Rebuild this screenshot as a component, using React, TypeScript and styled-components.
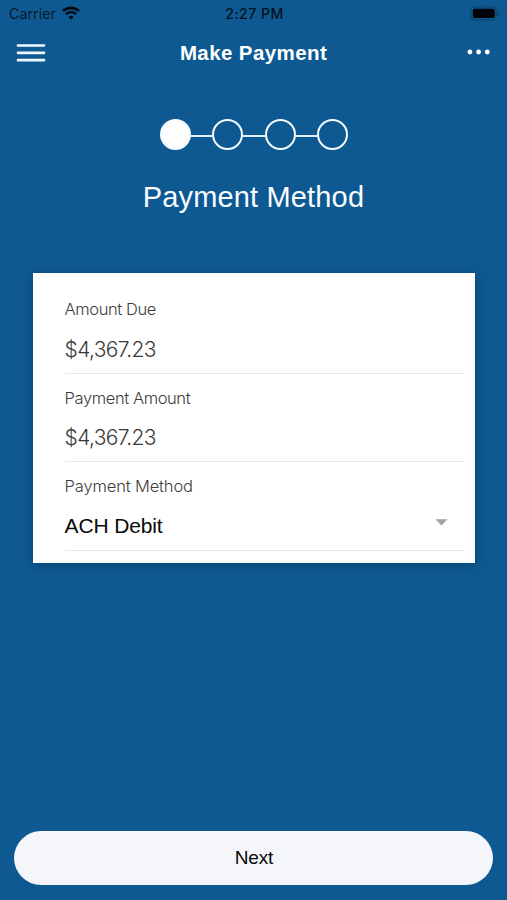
import React from "react";
import styled, { createGlobalStyle } from "styled-components";

const GlobalStyle = createGlobalStyle`
  * { box-sizing: border-box; }
  body { margin: 0; background: #0e5991; }
`;

const Screen = styled.div`
  width: 507px;
  height: 900px;
  display: flex;
  flex-direction: column;
  background: #0e5991;
  font-family: "Liberation Sans", Arial, sans-serif;
  overflow: hidden;
`;

const StatusBar = styled.header`
  height: 28px;
  display: grid;
  grid-template-columns: 1fr auto 1fr;
  align-items: center;
  padding: 0 7px 0 9px;
  color: #041a2c;
  font-family: Inter, sans-serif;
  font-size: 14px;
  line-height: 28px;
`;

const Network = styled.div`
  display: flex;
  align-items: center;
  gap: 6px;
  letter-spacing: 0.15px;

  svg {
    margin-top: -2px;
  }
`;

const Clock = styled.div`
  color: #03111e;
  font-weight: 500;
  letter-spacing: 0.5px;
`;

const Battery = styled.div`
  display: flex;
  justify-content: flex-end;
  margin-top: -2px;
`;

const NavBar = styled.nav`
  height: 50px;
  display: grid;
  grid-template-columns: 1fr auto 1fr;
  align-items: center;
  padding: 0 17px 0 16px;
`;

const Title = styled.h1`
  margin: -1px 0 0 1px;
  color: #fff;
  font-size: 20.5px;
  font-weight: 700;
  line-height: 24px;
  letter-spacing: 0.4px;
`;

const IconButton = styled.button<{ $end?: boolean }>`
  display: flex;
  padding: 0;
  border: 0;
  background: none;
  margin-top: ${({ $end }) => ($end ? "-2px" : "0")};
  justify-self: ${({ $end }) => ($end ? "end" : "start")};
`;

const Stepper = styled.div`
  display: flex;
  justify-content: center;
  align-items: center;
  height: 32px;
  margin-top: 40.5px;
  padding-left: 1px;
`;

const Step = styled.div<{ $active?: boolean }>`
  width: 31px;
  height: 31px;
  border: 2px solid #f5fbff;
  border-radius: 50%;
  background: ${({ $active }) => ($active ? "#fff" : "transparent")};
`;

const Connector = styled.div`
  width: 21.6px;
  height: 2px;
  margin-top: 3px;
  background: #e3f0f8;
`;

const Heading = styled.h2`
  margin: 28.5px 0 0;
  height: 36px;
  color: #f8fcff;
  text-align: center;
  font-size: 29px;
  font-weight: 400;
  line-height: 36px;
  letter-spacing: 0.15px;
`;

const Card = styled.main`
  width: 442px;
  height: 290px;
  margin: 58px 0 0 33px;
  padding: 12px 11px 0 31.6px;
  background: #fff;
  box-shadow: 0 2px 9px rgba(0, 25, 50, 0.32);
`;

const Field = styled.section`
  height: 88.5px;
  padding-top: 12px;
  border-bottom: 1px solid #e8e8e8;
`;

const Label = styled.div<{ $spacing?: number }>`
  height: 24px;
  color: #3c3c3c;
  font-family: Inter, sans-serif;
  font-size: 16.5px;
  font-weight: 300;
  line-height: 24px;
  letter-spacing: ${({ $spacing = -0.4 }) => $spacing}px;
`;

const Value = styled.div`
  margin-top: 14.5px;
  height: 28px;
  color: #383838;
  font-family: Inter, sans-serif;
  font-size: 21px;
  font-weight: 300;
  line-height: 28px;
  letter-spacing: -0.65px;
`;

const Select = styled.div`
  margin-top: 13.5px;
  height: 28px;
  display: flex;
  align-items: center;
  justify-content: space-between;
  padding-right: 16.5px;
  color: #080808;
  font-size: 21px;
  line-height: 28px;
  letter-spacing: -0.15px;
`;

const Caret = styled.svg`
  display: block;
  margin-bottom: 7px;
`;

const NextButton = styled.button`
  width: 479px;
  height: 54px;
  margin: auto 0 15px 14px;
  padding: 0 0 0 1px;
  border: 0;
  border-radius: 27px;
  background: #f4f6fa;
  color: #080808;
  font-family: "Liberation Sans", Arial, sans-serif;
  font-size: 19px;
  line-height: 54px;
  letter-spacing: -0.15px;
`;

const WifiIcon = () => (
  <svg width="18" height="14" viewBox="0 0 18 14" fill="none" stroke="#020b14">
    <path d="M1 5.1C5.5 .7 12.5 .7 17 5.1" strokeWidth="2.8" />
    <path d="M3.8 8.2C6.8 5.4 11.2 5.4 14.2 8.2" strokeWidth="2.4" />
    <path d="M9 13.5 6.3 10.8Q9 8.7 11.7 10.8Z" fill="#020b14" stroke="none" />
  </svg>
);

const BatteryIcon = () => (
  <svg width="30" height="15" viewBox="0 0 30 15">
    <rect x=".8" y=".8" width="25.4" height="13" rx="3.8" fill="none" stroke="#0a446f" strokeWidth="1.2" />
    <rect x="2.8" y="2.8" width="22" height="9.2" rx="2" fill="#000309" />
    <path d="M27.6 5v5q2-1 2-2.5T27.6 5Z" fill="#0a446f" />
  </svg>
);

const MenuIcon = () => (
  <svg width="30" height="20" viewBox="0 0 30 20" stroke="#f2faff" strokeWidth="2.7" strokeLinecap="round">
    <path d="M2 2.5H28M2 9.8H28M2 17.2H28" />
  </svg>
);

const MoreIcon = () => (
  <svg width="24" height="8" viewBox="0 0 24 8" fill="#fff">
    <circle cx="3.9" cy="4" r="2.4" />
    <circle cx="12.6" cy="4" r="2.4" />
    <circle cx="21.3" cy="4" r="2.4" />
  </svg>
);

export default function App() {
  return (
    <>
      <GlobalStyle />
      <Screen>
        <StatusBar>
          <Network>
            Carrier
            <WifiIcon />
          </Network>
          <Clock>2:27 PM</Clock>
          <Battery>
            <BatteryIcon />
          </Battery>
        </StatusBar>
        <NavBar>
          <IconButton aria-label="Menu">
            <MenuIcon />
          </IconButton>
          <Title>Make Payment</Title>
          <IconButton $end aria-label="More options">
            <MoreIcon />
          </IconButton>
        </NavBar>
        <Stepper>
          <Step $active />
          <Connector />
          <Step />
          <Connector />
          <Step />
          <Connector />
          <Step />
        </Stepper>
        <Heading>Payment Method</Heading>
        <Card>
          <Field>
            <Label>Amount Due</Label>
            <Value>$4,367.23</Value>
          </Field>
          <Field>
            <Label>Payment Amount</Label>
            <Value>$4,367.23</Value>
          </Field>
          <Field>
            <Label $spacing={-0.15}>Payment Method</Label>
            <Select>
              ACH Debit
              <Caret width="13" height="7" viewBox="0 0 13 7">
                <path d="M.5 .3h12l-6 6.2Z" fill="#a3a3a3" />
              </Caret>
            </Select>
          </Field>
        </Card>
        <NextButton>Next</NextButton>
      </Screen>
    </>
  );
}
